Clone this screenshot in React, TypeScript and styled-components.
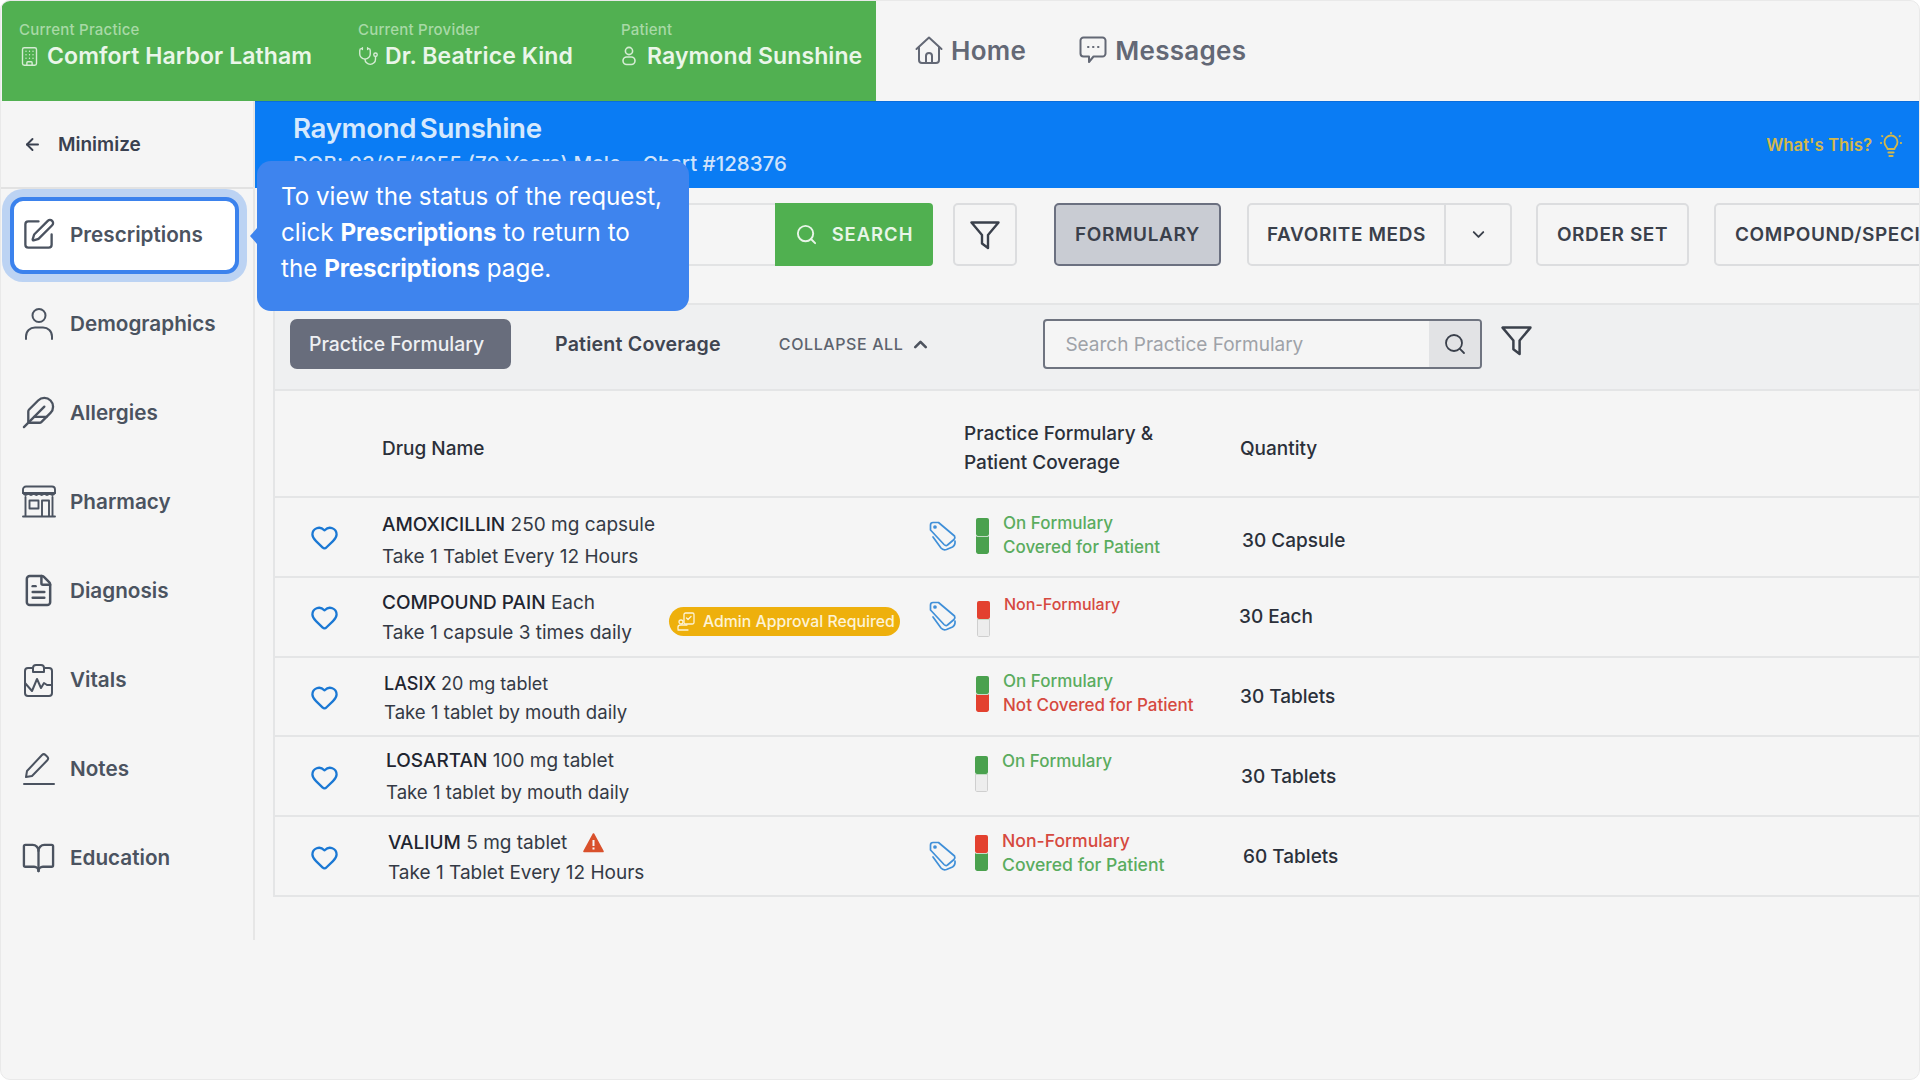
import React from 'react';
import styled, { createGlobalStyle } from 'styled-components';
import { ArrowLeft, BookOpen, Building, ChevronDown, ChevronUp, Feather, FileText, Heart, Search, SquarePen, Stethoscope } from 'lucide-react';

const Global = createGlobalStyle`
  html, body { margin: 0; padding: 0; background: #fff; }
  body { font-family: Inter, "Liberation Sans", sans-serif; }
  *, *::before, *::after { box-sizing: border-box; }
`;

const Frame = styled.div`
  position: relative; width: 1920px; height: 1080px; overflow: hidden;
  display: flex; flex-direction: column;
  background: #f5f5f5; border: 1px solid #e9e9e9; border-radius: 10px;
`;
const TopBar = styled.header`
  height: 100px; display: flex; flex-shrink: 0;
`;
const GreenBlock = styled.div`
  width: 874px; margin-left: 1px; background: #51b051; display: flex;
`;
const ContextBlock = styled.div<{ $w: number; $pad: number }>`
  width: ${p => p.$w}px; padding: 20px 0 0 ${p => p.$pad}px;
`;
const ContextLabel = styled.div`
  font-size: 15px; line-height: 18px; color: #a8d9a6; font-weight: 500; letter-spacing: .2px;
`;
const ContextValue = styled.div<{ $gap: number }>`
  display: flex; align-items: center; gap: ${p => p.$gap}px; margin-top: 4px;
  font-size: 23px; line-height: 26px; font-weight: 600; color: #eaf6e9; white-space: nowrap; letter-spacing: .1px;
`;
const TopNav = styled.nav`
  display: flex; align-items: center; padding: 0 0 2px 39px; gap: 53px; color: #636875;
`;
const TopLink = styled.div`
  display: flex; align-items: center; gap: 8px; font-size: 26px; font-weight: 600; letter-spacing: .3px;
`;
const Body = styled.div`
  display: flex; flex: 0 0 auto; height: 839px;
`;
const Sidebar = styled.aside`
  width: 254px; flex-shrink: 0; border-right: 2px solid #e6e6e6; display: flex; flex-direction: column;
`;
const MinimizeRow = styled.div`
  height: 88px; display: flex; align-items: center; gap: 16px; padding-left: 22px;
  font-size: 19px; font-weight: 600; color: #3a4150; border-bottom: 2px solid #e2e2e2;
  flex-shrink: 0;
`;
const NavList = styled.div`
  display: flex; flex-direction: column; padding-top: 1px;
`;
const NavItem = styled.div<{ $active?: boolean }>`
  position: relative; height: 89px; display: flex; align-items: center; padding-left: 20px; gap: 14px;
  font-size: 20.7px; font-weight: 600; color: #4b5360;
  ${p => p.$active ? `
    &::before {
      content: ""; position: absolute; left: 9px; top: 7px; width: 229px; height: 77px;
      background: #fff; border: 4px solid #3b82ed; border-radius: 13px;
      box-shadow: 0 0 0 8px #bcd3f3;
    }
  ` : ''}
`;
const NavIcon = styled.span`
  position: relative; width: 35px; height: 35px; display: flex; align-items: center; justify-content: center;
  flex-shrink: 0;
`;
const NavText = styled.span`
  position: relative;
`;
const Main = styled.main`
  flex: 1; min-width: 0; display: flex; flex-direction: column;
`;
const Banner = styled.section`
  height: 87px; background: #0a7cf4; padding: 10px 17px 0 38px; display: flex; justify-content: space-between;
  flex-shrink: 0; border-top: 1px solid #0a6ddc;
`;
const PatientName = styled.div`
  font-size: 27.7px; line-height: 32px; font-weight: 600; color: #d6e9fd; letter-spacing: -.35px; word-spacing: -3px;
`;
const PatientMeta = styled.div`
  font-size: 20.5px; line-height: 24px; font-weight: 500; color: #cfe3fb; margin-top: 8px; white-space: pre;
`;
const WhatsThis = styled.div`
  display: flex; align-items: center; gap: 8px; font-size: 16.8px; font-weight: 600; color: #d5b84a; height: 64px; margin-top: 1px;
`;
const Toolbar = styled.div`
  height: 115px; padding: 15px 0 0 34px; display: flex; align-items: flex-start; overflow: hidden; flex-shrink: 0;
`;
const SearchField = styled.div`
  width: 486px; height: 63px; border: 2px solid #e2e3e4; border-right: 0; flex-shrink: 0;
`;
const SearchButton = styled.div`
  width: 158px; height: 63px; background: #50b050; color: #e8f5e8; border-radius: 0 4px 4px 0; padding-bottom: 1px;
  display: flex; align-items: center; justify-content: center; gap: 14px; font-size: 18.4px; font-weight: 600; letter-spacing: 1px; flex-shrink: 0;
`;
const ToolButton = styled.div<{ $active?: boolean; $ml: number; $w: number }>`
  margin-left: ${p => p.$ml}px; width: ${p => p.$w}px; height: 63px; flex-shrink: 0;
  display: flex; align-items: center; justify-content: center;
  font-size: 19px; font-weight: 600; letter-spacing: .6px; color: #3a404b; white-space: nowrap;
  border-radius: 5px; border: 2px solid ${p => p.$active ? '#6b7080' : '#dcdddf'};
  background: ${p => p.$active ? '#c9ccd3' : '#f5f5f5'};
`;
const SplitLabel = styled.span`
  flex: 1; text-align: center;
`;
const SplitCaret = styled.span`
  width: 66px; height: 100%; border-left: 2px solid #dcdddf; display: flex; align-items: center; justify-content: center;
`;
const CutText = styled.span`
  padding-left: 19px; width: 100%;
`;
const TabBar = styled.div`
  height: 88px; margin-left: 18px; background: #eff0f1; border-top: 2px solid #e4e5e6; border-bottom: 2px solid #e4e5e6;
  border-left: 2px solid #e4e5e6;
  display: flex; align-items: flex-start; flex-shrink: 0; padding: 14px 0 0 15px;
`;
const TabActive = styled.div`
  width: 221px; height: 50px; border-radius: 7px; background: #686d7c; color: #eef0f3;
  display: flex; align-items: center; padding-left: 19px; font-size: 19.4px; font-weight: 500;
`;
const TabPlain = styled.div`
  margin-left: 44px; height: 50px; display: flex; align-items: center; font-size: 19.6px; font-weight: 600; color: #3f4551; letter-spacing: .2px;
`;
const Collapse = styled.div`
  margin-left: 58px; height: 50px; display: flex; align-items: center; gap: 7px; font-size: 16px; font-weight: 500; color: #5d636e; letter-spacing: .6px;
`;
const PracticeSearch = styled.div`
  margin-left: 112px; width: 439px; height: 50px; border: 2px solid #6f7480; border-radius: 4px; background: #f5f5f5;
  display: flex; overflow: hidden;
`;
const PracticeInput = styled.div`
  flex: 1; padding-left: 20px; display: flex; align-items: center; font-size: 19px; color: #9ea2a8;
`;
const PracticeBtn = styled.div`
  width: 51px; background: #e2e3e5; display: flex; align-items: center; justify-content: center;
`;
const TabFilter = styled.div`
  margin: 6px 0 0 19px; display: flex;
`;
const Table = styled.div`
  margin-left: 18px; border-left: 2px solid #e4e5e6;
`;
const HeaderRow = styled.div`
  height: 107px; display: grid; grid-template-columns: 107px 582px 276px 1fr; align-items: center;
  padding-top: 9px;
  border-bottom: 2px solid #e4e5e6; font-size: 19px; font-weight: 500; color: #2b303a;
`;
const HeaderCell = styled.div`
  line-height: 29px;
`;
const DrugRow = styled.div`
  height: 79.8px; display: grid; grid-template-columns: 107px 287px 250px 50px 269px 1fr; align-items: center;
  border-bottom: 2px solid #e4e5e6;
`;
const HeartCell = styled.div`
  display: flex; justify-content: center; padding: 2px 8px 0 0; color: #1a78d4;
`;
const DrugCell = styled.div<{ $dx: number; $gap: number; $dy: number }>`
  padding: ${p => p.$dy}px 0 0 ${p => p.$dx}px; display: flex; flex-direction: column; gap: ${p => p.$gap}px; white-space: nowrap;
`;
const DrugTitle = styled.div<{ $size: number }>`
  display: flex; align-items: center; gap: 16px; font-size: ${p => p.$size}px; line-height: 24px; color: #343a45;
  b { font-weight: 500; color: #1f2530; }
`;
const DrugDirections = styled.div<{ $size: number }>`
  font-size: ${p => p.$size}px; line-height: 24px; color: #343a45;
`;
const BadgeCell = styled.div`
  padding-top: 10px;
`;
const Badge = styled.div`
  width: 231px; height: 29px; border-radius: 15px; background: #eeb00c; color: #fdf3d6;
  display: flex; align-items: center; gap: 8px; padding-left: 8px; font-size: 15.8px; font-weight: 500; white-space: nowrap;
`;
const TagCell = styled.div`
  padding-left: 10px; display: flex;
`;
const StatusCell = styled.div<{ $dx: number; $top: number }>`
  align-self: start; margin-top: ${p => p.$top}px;
  display: flex; align-items: flex-start; gap: 14px; padding-left: ${p => p.$dx}px; height: 36px;
`;
const Pill = styled.div`
  width: 13px; height: 36px; display: flex; flex-direction: column; flex-shrink: 0; border-radius: 2px; overflow: hidden;
`;
const PillPart = styled.div<{ $c: string }>`
  flex: 1;
  background: ${p => p.$c === 'g' ? '#4aa14e' : p.$c === 'r' ? '#e3412f' : '#ededed'};
  border: 1px solid ${p => p.$c === 'e' ? '#cfcfcf' : 'transparent'};
  border-radius: 0 0 2px 2px;
  & + & { border-top: 1px solid #c4dcc5; }
`;
const StatusLines = styled.div<{ $lift: number }>`
  display: flex; flex-direction: column; gap: 1px; margin-top: ${p => -6 - p.$lift}px;
`;
const StatusLine = styled.div<{ $red?: boolean; $size: number }>`
  font-size: ${p => p.$size}px; line-height: 23px; font-weight: 500; white-space: nowrap;
  color: ${p => p.$red ? '#d6493f' : '#5aac5e'};
`;
const QtyCell = styled.div<{ $dx: number; $dy: number }>`
  padding: ${p => p.$dy}px 0 0 ${p => p.$dx}px; font-size: 19px; font-weight: 500; color: #2b303a; white-space: nowrap;
`;
const Tooltip = styled.div`
  position: absolute; left: 256px; top: 160px; width: 432px; height: 150px; background: #3e84ee; border-radius: 14px;
  padding: 18px 10px 0 24px; color: #fff; font-size: 24.2px; line-height: 36px; z-index: 5;
  b { font-weight: 700; letter-spacing: -.15px; }
  &::before {
    content: ""; position: absolute; left: -7px; top: 67px; border-style: solid; border-width: 8px 7px 8px 0;
    border-color: transparent #3e84ee transparent transparent;
  }
`;

const Tags = () => (
  <svg width="28" height="31" viewBox="0 0 28 31" fill="none" stroke="#3f8fd8" strokeWidth="1.700" strokeLinejoin="round" strokeLinecap="round">
    <path d="M1.500 9V4Q1.500 1.500 4 1.500H9.500L25.500 15Q26.500 17 25 18.500L18.500 24Q17 25.500 15 23.500Z" />
    <circle cx="6" cy="6" r="1" fill="#3f8fd8" />
    <path d="M4 16 12 27Q14 29.500 17.500 28.500L23.500 26Q26.500 24 26 20" />
  </svg>
);
const Warning = () => (
  <svg width="21" height="20" viewBox="0 0 21 20">
    <path d="M10.500 1 20 18.500H1Z" fill="#d9512c" stroke="#d9512c" strokeWidth="1.600" strokeLinejoin="round" />
    <path d="M9.500 7h2v6h-2zM9.500 14.500h2v2h-2z" fill="#f5f5f5" />
  </svg>
);
const Ic = ({ w, h, c = '#4b5360', sw = 2, children }: { w: number; h: number; c?: string; sw?: number; children: React.ReactNode }) => (
  <svg width={w} height={h} viewBox={`0 0 ${w} ${h}`} fill="none" stroke={c} strokeWidth={sw} strokeLinecap="round" strokeLinejoin="round">{children}</svg>
);
const VitalsIcon = () => (
  <Ic w={29} h={34}>
    <path d="M8 5H4a3 3 0 0 0-3 3v22a3 3 0 0 0 3 3h21a3 3 0 0 0 3-3V8a3 3 0 0 0-3-3h-4" />
    <path d="M9 9V5a3 3 0 0 1 3-3h5a3 3 0 0 1 3 3v4z" />
    <path d="M1 20l7 8 5-12 4 9 3-5 3 2h5" />
  </Ic>
);
const NotesIcon = () => (
  <Ic w={34} h={34}>
    <path d="M2 32h30" />
    <path d="M4 25l1-6L20 3a2.500 2.500 0 0 1 3.500 0l1.800 1.800a2.500 2.500 0 0 1 0 3.500L10 24z" />
  </Ic>
);
const StoreIcon = () => (
  <Ic w={34} h={33} sw={1.9}>
    <path d="M4 1.500h26a3 3 0 0 1 3 3V8H1V4.500a3 3 0 0 1 3-3z" />
    <path d="M1 8q2.700 4 5.300 0q2.700 4 5.400 0q2.700 4 5.300 0q2.700 4 5.300 0q2.700 4 5.400 0q2.700 4 5.300 0" />
    <path d="M3.500 12v19M30.500 12v19M1 31.500h32" />
    <rect x="7.500" y="15.500" width="9" height="8" />
    <path d="M20 31V15.500h7V31" />
  </Ic>
);
const PersonIcon = () => (
  <Ic w={32} h={34} sw={2}>
    <circle cx="16" cy="8.500" r="6.500" />
    <path d="M3 32v-2.500C3 24 7 20.500 12 20.500h8c5 0 9 3.500 9 9V32" />
  </Ic>
);
const SmallPerson = () => (
  <Ic w={16} h={20} c="#d5ecd4" sw={1.6}>
    <circle cx="8" cy="5" r="3.600" />
    <rect x="2" y="11" width="12" height="7.500" rx="3.700" />
  </Ic>
);
const HomeIcon = () => (
  <Ic w={28} h={28} c="#636875">
    <path d="M1.500 13 14 1.500 26.500 13" />
    <path d="M4 11v13a3 3 0 0 0 3 3h14a3 3 0 0 0 3-3V11" />
    <path d="M11 27v-7a3 3 0 0 1 6 0v7" />
  </Ic>
);
const MessageIcon = () => (
  <Ic w={28} h={28} c="#636875">
    <path d="M4.500 1.500h19a3 3 0 0 1 3 3v13a3 3 0 0 1-3 3h-9l-4.500 5.500v-5.500H4.500a3 3 0 0 1-3-3v-13a3 3 0 0 1 3-3z" />
    <path d="M9 11h.5M14 11h.5M19 11h.5" />
  </Ic>
);
const FunnelIcon = ({ s }: { s: number }) => (
  <svg width={s} height={s} viewBox="0 0 30 30" fill="none" stroke="#3a404b" strokeWidth="2.400" strokeLinejoin="round" strokeLinecap="round">
    <path d="M1.500 2.500h27L18 15v13l-6-4.500V15z" />
  </svg>
);
const BulbIcon = () => (
  <Ic w={22} h={26} c="#d5b84a" sw={1.800}>
    <path d="M7.500 17c0-2-3-3-3-7a6.500 6.500 0 0 1 13 0c0 4-3 5-3 7z" />
    <path d="M8.500 20.500h5M9.500 24h3" strokeWidth="2.200" />
    <path d="M11 .8v.4M2 4l.4.3M20 4l-.4.3M.8 11h.4M21.200 11h-.4" />
  </Ic>
);
const ApprovalIcon = () => (
  <Ic w={18} h={19} c="#fdf3d6" sw={1.300}>
    <rect x="7" y="1" width="10" height="11" rx="1.500" />
    <path d="M9.500 6l1.500 1.500 3-3" />
    <circle cx="4" cy="10" r="2" />
    <path d="M1 17v-2c0-1 1-2 3-2h6M1 18h10" />
  </Ic>
);

const nav = [
  { label: 'Prescriptions', icon: <SquarePen size={35} strokeWidth={1.6} color="#4b5360" />, active: true },
  { label: 'Demographics', icon: <PersonIcon /> },
  { label: 'Allergies', icon: <Feather size={35} strokeWidth={1.6} color="#4b5360" /> },
  { label: 'Pharmacy', icon: <StoreIcon /> },
  { label: 'Diagnosis', icon: <FileText size={35} strokeWidth={1.7} color="#4b5360" /> },
  { label: 'Vitals', icon: <VitalsIcon /> },
  { label: 'Notes', icon: <NotesIcon /> },
  { label: 'Education', icon: <BookOpen size={36} strokeWidth={1.6} color="#4b5360" /> },
];

type Drug = {
  name: string; dose: string; dir: string; dx: number; dy: number; gap: number; title: number; dirSize: number;
  warn?: boolean; badge?: boolean; tag?: boolean; lift: number;
  pill: [string, string]; top: number; status: { t: string; red?: boolean; s: number }[]; pillDx: number; qty: string; qtyDx: number; qtyDy: number;
};
const drugs: Drug[] = [
  { name: 'AMOXICILLIN', dose: ' 250 mg capsule', dir: 'Take 1 Tablet Every 12 Hours', title: 19, dirSize: 19, dx: 0, dy: 8, gap: 8, tag: true, pill: ['g', 'g'], top: 20, lift: 0, status: [{ t: 'On Formulary', s: 17 }, { t: 'Covered for Patient', s: 17 }], pillDx: 7, qty: '30 Capsule', qtyDx: 4, qtyDy: 7 },
  { name: 'COMPOUND PAIN', dose: ' Each', dir: 'Take 1 capsule 3 times daily', title: 19, dirSize: 19, dx: 0, dy: 3, gap: 6, badge: true, tag: true, pill: ['r', 'e'], top: 23, lift: 2, status: [{ t: 'Non-Formulary', red: true, s: 16 }], pillDx: 8, qty: '30 Each', qtyDx: 1, qtyDy: 0 },
  { name: 'LASIX', dose: ' 20 mg tablet', dir: 'Take 1 tablet by mouth daily', title: 18, dirSize: 18.6, dx: 2, dy: 3, gap: 4, pill: ['g', 'r'], top: 18, lift: 0, status: [{ t: 'On Formulary', s: 17 }, { t: 'Not Covered for Patient', red: true, s: 17 }], pillDx: 7, qty: '30 Tablets', qtyDx: 2, qtyDy: 0 },
  { name: 'LOSARTAN', dose: ' 100 mg tablet', dir: 'Take 1 tablet by mouth daily', title: 19, dirSize: 18.6, dx: 4, dy: 1, gap: 7, pill: ['g', 'e'], top: 19, lift: 0, status: [{ t: 'On Formulary', s: 17 }], pillDx: 6, qty: '30 Tablets', qtyDx: 3, qtyDy: 0 },
  { name: 'VALIUM', dose: ' 5 mg tablet', dir: 'Take 1 Tablet Every 12 Hours', title: 19, dirSize: 19, dx: 6, dy: 3, gap: 6, warn: true, tag: true, pill: ['r', 'g'], top: 18, lift: 0, status: [{ t: 'Non-Formulary', red: true, s: 17.6 }, { t: 'Covered for Patient', s: 17.6 }], pillDx: 6, qty: '60 Tablets', qtyDx: 5, qtyDy: 0 },
];

export default function App() {
  return (
    <Frame>
      <Global />
      <TopBar>
        <GreenBlock>
          <ContextBlock $w={339} $pad={17}>
            <ContextLabel>Current Practice</ContextLabel>
            <ContextValue $gap={7}><Building size={21} strokeWidth={1.6} color="#d5ecd4" />Comfort Harbor Latham</ContextValue>
          </ContextBlock>
          <ContextBlock $w={262} $pad={17}>
            <ContextLabel>Current Provider</ContextLabel>
            <ContextValue $gap={6}><Stethoscope size={21} strokeWidth={1.6} color="#d5ecd4" />Dr. Beatrice Kind</ContextValue>
          </ContextBlock>
          <ContextBlock $w={270} $pad={18}>
            <ContextLabel>Patient</ContextLabel>
            <ContextValue $gap={10}><SmallPerson />Raymond Sunshine</ContextValue>
          </ContextBlock>
        </GreenBlock>
        <TopNav>
          <TopLink><HomeIcon />Home</TopLink>
          <TopLink><MessageIcon />Messages</TopLink>
        </TopNav>
      </TopBar>
      <Body>
        <Sidebar>
          <MinimizeRow><ArrowLeft size={19} strokeWidth={2.4} />Minimize</MinimizeRow>
          <NavList>
            {nav.map(n => (
              <NavItem key={n.label} $active={n.active}>
                <NavIcon>{n.icon}</NavIcon>
                <NavText>{n.label}</NavText>
              </NavItem>
            ))}
          </NavList>
        </Sidebar>
        <Main>
          <Banner>
            <div>
              <PatientName>Raymond Sunshine</PatientName>
              <PatientMeta>{'DOB: 03/25/1955 (70 Years) Male    Chart #128376'}</PatientMeta>
            </div>
            <WhatsThis>What's This? <BulbIcon /></WhatsThis>
          </Banner>
          <Toolbar>
            <SearchField />
            <SearchButton><Search size={23} strokeWidth={2} />SEARCH</SearchButton>
            <ToolButton $ml={20} $w={64}><FunnelIcon s={30} /></ToolButton>
            <ToolButton $ml={37} $w={167} $active>FORMULARY</ToolButton>
            <ToolButton $ml={26} $w={265}>
              <SplitLabel>FAVORITE MEDS</SplitLabel>
              <SplitCaret><ChevronDown size={19} strokeWidth={2.4} color="#3a404b" /></SplitCaret>
            </ToolButton>
            <ToolButton $ml={24} $w={153}>ORDER SET</ToolButton>
            <ToolButton $ml={25} $w={300}><CutText>COMPOUND/SPECIALTY</CutText></ToolButton>
          </Toolbar>
          <TabBar>
            <TabActive>Practice Formulary</TabActive>
            <TabPlain>Patient Coverage</TabPlain>
            <Collapse>COLLAPSE ALL <ChevronUp size={21} strokeWidth={3} color="#4d535e" /></Collapse>
            <PracticeSearch>
              <PracticeInput>Search Practice Formulary</PracticeInput>
              <PracticeBtn><Search size={24} strokeWidth={1.8} color="#3a404b" /></PracticeBtn>
            </PracticeSearch>
            <TabFilter><FunnelIcon s={31} /></TabFilter>
          </TabBar>
          <Table>
            <HeaderRow>
              <div />
              <HeaderCell>Drug Name</HeaderCell>
              <HeaderCell>Practice Formulary &amp;<br />Patient Coverage</HeaderCell>
              <HeaderCell>Quantity</HeaderCell>
            </HeaderRow>
            {drugs.map(d => (
              <DrugRow key={d.name}>
                <HeartCell><Heart size={29} strokeWidth={1.9} /></HeartCell>
                <DrugCell $dx={d.dx} $gap={d.gap} $dy={d.dy}>
                  <DrugTitle $size={d.title}><span><b>{d.name}</b>{d.dose}</span>{d.warn && <Warning />}</DrugTitle>
                  <DrugDirections $size={d.dirSize}>{d.dir}</DrugDirections>
                </DrugCell>
                <BadgeCell>{d.badge && <Badge><ApprovalIcon />Admin Approval Required</Badge>}</BadgeCell>
                <TagCell>{d.tag && <Tags />}</TagCell>
                <StatusCell $dx={d.pillDx} $top={d.top}>
                  <Pill><PillPart $c={d.pill[0]} /><PillPart $c={d.pill[1]} /></Pill>
                  <StatusLines $lift={d.lift}>{d.status.map(s => <StatusLine key={s.t} $red={s.red} $size={s.s}>{s.t}</StatusLine>)}</StatusLines>
                </StatusCell>
                <QtyCell $dx={d.qtyDx} $dy={d.qtyDy}>{d.qty}</QtyCell>
              </DrugRow>
            ))}
          </Table>
        </Main>
      </Body>
      <Tooltip>
        To view the status of the request,<br />click <b>Prescriptions</b> to return to<br />the <b>Prescriptions</b> page.
      </Tooltip>
    </Frame>
  );
}
